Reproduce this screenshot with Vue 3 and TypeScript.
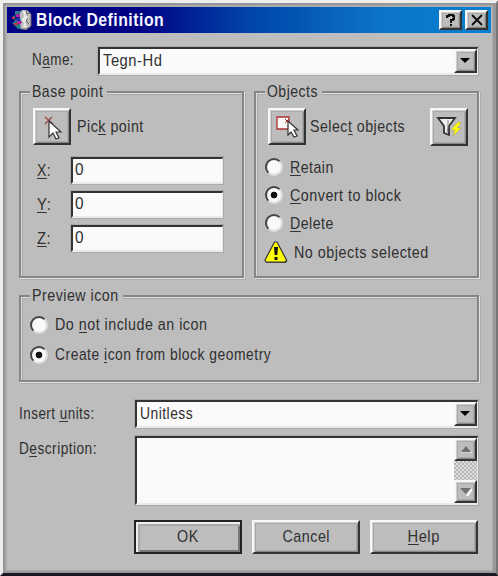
<script setup lang="ts">
import { ref, type Directive } from 'vue'

const name = ref('Tegn-Hd')
const axes = ref([
  { key: 'X', value: '0' },
  { key: 'Y', value: '0' },
  { key: 'Z', value: '0' },
])
const mode = ref('convert')
const modes = [
  { id: 'retain', key: 'R', rest: 'etain', width: 44 },
  { id: 'convert', key: 'C', rest: 'onvert to block', width: 111 },
  { id: 'delete', key: 'D', rest: 'elete', width: 44 },
]
const preview = ref('create')
const previews = [
  { id: 'none', before: 'Do ', key: 'n', after: 'ot include an icon', width: 152 },
  { id: 'create', before: 'Create ', key: 'i', after: 'con from block geometry', width: 216 },
]

// Condenses a label horizontally to the given width in pixels.
const vFit: Directive<HTMLElement, number> = {
  mounted(el, binding) {
    el.style.transform = `scaleX(${binding.value / el.offsetWidth})`
  },
}
</script>

<template>
  <div class="window">
    <header class="title-bar">
      <svg class="app-icon" width="22" height="22" viewBox="0 0 22 22">
        <path d="M4 2h7v18H7L1 14l3-2-3-4 3-2z" fill="#287c83" />
        <path d="M4 6h5v5H4z" fill="#1c1c78" />
        <path d="M5 5h4v3H5zM6 12h5v3H6z" fill="#b020a0" />
        <path d="M1 8h3v2H1zM3 14h4v2H3z" fill="#c03048" />
        <path d="M6 9h3v3H6zM9 15h3v3H9z" fill="#2038c0" />
        <path d="M11 1h5l4 4v12l-5 4-5-1-1-4 2-3-2-4 0-5z" fill="#bdbdbd" />
        <path d="M12 2l4 1-2 3 4 3-4 4 2 5-4 1 1-5-3-3 3-3z" fill="#ececec" />
        <path d="M15 1l1 4 3-1M17 9l-2 3 3 3M10 20h6l4-3V6" fill="none" stroke="#626262" />
      </svg>
      <h1><span v-fit="128" class="t">Block Definition</span></h1>
      <button class="raised caption" aria-label="?">
        <svg width="12" height="14" viewBox="0 0 12 14"><path d="M2 5V3h2V2h4v1h1v3H8v1H6v3M6 11v2" fill="none" stroke="#111" stroke-width="2" /></svg>
      </button>
      <button class="raised caption" aria-label="×">
        <svg width="12" height="12" viewBox="0 0 12 12"><path d="M1 1l10 10M11 1L1 11" stroke="#111" stroke-width="2" /></svg>
      </button>
    </header>

    <main>
      <div class="row name-row">
        <label class="name-label"><span v-fit="42" class="t">N<u>a</u>me:</span></label>
        <div class="sunken combo">
          <span v-fit="59" class="t">{{ name }}</span>
          <button class="raised arrow"><svg width="10" height="5"><path d="M0 0h10L5 5z" /></svg></button>
        </div>
      </div>

      <div class="groups">
        <section class="group">
          <h2><span v-fit="71" class="t">Base point</span></h2>
          <div class="row tool-row">
            <button class="raised tool">
              <svg width="22" height="26" viewBox="0 0 22 26">
                <path d="M4 3l8 7M11 3l-7 7" stroke="#9a4545" stroke-width="1.2" />
                <path d="M8 7v16l4-4 3 6 3-1-3-6h5z" fill="#fff" stroke="#333" stroke-width="1.2" />
              </svg>
            </button>
            <span v-fit="67" class="t">Pic<u>k</u> point</span>
          </div>
          <div class="axes">
            <label v-for="axis in axes" :key="axis.key" class="row axis">
              <span class="axis-name"><span v-fit="14" class="t"><u>{{ axis.key }}</u>:</span></span>
              <span class="sunken field"><span v-fit="9" class="t">{{ axis.value }}</span></span>
            </label>
          </div>
        </section>

        <section class="group">
          <h2><span v-fit="51" class="t">Objects</span></h2>
          <div class="row tool-row">
            <button class="raised tool">
              <svg width="24" height="26" viewBox="0 0 24 26">
                <path d="M2 3h12v12H2z" fill="#f8f8f8" stroke="#a33" stroke-width="1.3" />
                <path d="M10 5l4 4m0-4l-4 4" stroke="#a33" />
                <path d="M13 7v14l3-3 3 5 3-1-3-6h4z" fill="#fff" stroke="#333" stroke-width="1.2" />
              </svg>
            </button>
            <span v-fit="95" class="t select-text">Selec<u>t</u> objects</span>
            <button class="raised tool filter">
              <svg width="26" height="24" viewBox="0 0 26 24">
                <path d="M2 3h17l-6 8v9l-5-2v-7z" fill="#eee" stroke="#333" stroke-width="1.8" />
                <path d="M12 5v6l-1 7" stroke="#888" fill="none" />
                <path d="M22 7l-7 8h4l-2 6 8-8h-4l4-5z" fill="#ff0" stroke="#aaa040" stroke-width=".5" />
              </svg>
            </button>
          </div>
          <div class="modes">
            <label v-for="item in modes" :key="item.id" class="row option" @click="mode = item.id">
              <i class="radio" :class="{ on: mode === item.id }" />
              <span v-fit="item.width" class="t"><u>{{ item.key }}</u>{{ item.rest }}</span>
            </label>
          </div>
          <div class="row warning">
            <svg width="24" height="24" viewBox="0 0 24 24">
              <path d="M10.5 2h2.5l9.5 18-1.5 2H2l-1-2z" fill="#ff0" stroke="#333" stroke-width="1.2" />
              <path d="M2 22.5h20l1-2" stroke="#444" fill="none" />
              <path d="M10 7h4l-.7 8h-2.6zM10.5 17h3v3h-3z" fill="#111" />
            </svg>
            <span v-fit="135" class="t">No objects selected</span>
          </div>
        </section>
      </div>

      <section class="group preview">
        <h2><span v-fit="87" class="t">Preview icon</span></h2>
        <label v-for="item in previews" :key="item.id" class="row option" @click="preview = item.id">
          <i class="radio" :class="{ on: preview === item.id }" />
          <span v-fit="item.width" class="t">{{ item.before }}<u>{{ item.key }}</u>{{ item.after }}</span>
        </label>
      </section>

      <div class="row units-row">
        <label class="side-label"><span v-fit="76" class="t">Insert <u>u</u>nits:</span></label>
        <div class="sunken combo">
          <span v-fit="53" class="t">Unitless</span>
          <button class="raised arrow"><svg width="10" height="5"><path d="M0 0h10L5 5z" /></svg></button>
        </div>
      </div>

      <div class="row description-row">
        <label class="side-label"><span v-fit="78" class="t">D<u>e</u>scription:</span></label>
        <div class="sunken memo">
          <div class="scrollbar">
            <button class="raised scroll"><svg width="12" height="7"><path d="M1 6h11" stroke="#eee" /><path d="M6 0l5 6H1z" fill="#707070" /></svg></button>
            <div class="track" />
            <button class="raised scroll"><svg width="12" height="8"><path d="M7 8l5-7" stroke="#fff" stroke-width="2" /><path d="M0 0h11L5.500 6z" fill="#707070" /></svg></button>
          </div>
        </div>
      </div>

      <footer>
        <button class="raised action default"><span v-fit="22" class="t">OK</span></button>
        <button class="raised action"><span v-fit="48" class="t">Cancel</span></button>
        <button class="raised action"><span v-fit="32" class="t"><u>H</u>elp</span></button>
      </footer>
    </main>
  </div>
</template>

<style>
body { margin: 0; overflow: hidden; background: #bdbdbd; }
</style>

<style scoped>
* { box-sizing: border-box; }
.window {
  width: 498px;
  height: 576px;
  background: #bdbdbd;
  border: solid;
  border-width: 3px 2px 3px 3px;
  border-color: #eee #777 #171a20 #eee;
  box-shadow: inset 2px 2px #969696, inset -3px -2px #999, inset 4px 4px #aaa, inset -4px -3px #aaa;
  padding: 4px 5px 3px 4px;
  color: #303030;
  font: 17px/20px "Liberation Sans", Arial, sans-serif;
}
.t {
  display: inline-block;
  flex: none;
  white-space: nowrap;
  letter-spacing: .6px;
  transform-origin: left center;
}
u { text-decoration: none; box-shadow: inset 0 -1px #bdbdbd, inset 0 -2px #333; }
button { margin: 0; padding: 0; font: inherit; color: inherit; }
.row { display: flex; align-items: center; }
.title-bar {
  display: flex;
  align-items: center;
  height: 26px;
  padding: 0 3px 0 4px;
  background: linear-gradient(90deg, #000084 0 27%, #0045a8 50%, #0c75c8 78%, #087fd0);
}
.app-icon { flex: none; }
h1 { flex: 1; margin: 0 0 0 3px; font: bold 19px/24px "Liberation Sans", Arial, sans-serif; color: #f4f4ff; }
.raised {
  display: flex;
  align-items: center;
  justify-content: center;
  flex: none;
  background: #bdbdbd;
  border: 2px solid;
  border-color: #f7f7f7 #333 #333 #f7f7f7;
  box-shadow: inset 1px 1px #cfcfcf, inset 2px 2px #aaa, inset -1px -1px #888, inset -2px -2px #aaa;
}
.caption { width: 23px; height: 20px; }
.caption + .caption { margin-left: 3px; }
.sunken {
  background: #fafafa;
  border: solid;
  border-width: 3px 2px 3px 3px;
  border-color: #333 #e9e9e9 #e9e9e9 #333;
  outline: 1px solid #aaa;
  outline-offset: -1px;
}
main { padding: 13px 12px 0 12px; }
.name-row { height: 30px; }
.name-label { flex: none; width: 78px; padding-left: 13px; }
.combo { display: flex; flex: 1; align-items: center; height: 30px; padding-left: 3px; }
.name-row .t { position: relative; top: -1px; }
.name-row .combo .t { top: 0; }
.arrow { width: 23px; height: 24px; margin-left: auto; padding: 0 1px 1px 0; }
.groups { display: flex; justify-content: space-between; margin-top: 15px; }
.group {
  width: 225px;
  height: 187px;
  border: 2px solid #858585;
  box-shadow: inset 1px 1px #ddd, inset 2px 2px #aaa, 1px 1px #e5e5e5, 2px 2px #aaa;
}
h2 { width: max-content; height: 15px; margin: -11px 0 0 9px; padding: 0 0 0 2px; font: inherit; background: #bdbdbd; }
.groups .group:first-child h2 { width: 77px; }
.groups .group:last-child h2 { width: 57px; }
.preview h2 { width: 93px; }
.tool-row { height: 38px; margin: 11px 0 0 12px; align-items: flex-start; }
.tool { width: 38px; height: 37px; }
.tool-row .t { margin: 9px 0 0 6px; }
.tool-row .select-text { margin: 9px -30px 0 4px; }
.filter { height: 38px; margin: 0 9px 0 auto; }
.axes { display: grid; gap: 5px; margin-top: 10px; }
.axis { height: 29px; }
.axis-name { width: 49px; padding-left: 16px; }
.field { width: 154px; height: 29px; padding: 1px 2px; }
.modes { display: grid; gap: 8px; margin: 11px 0 0 9px; }
.option { height: 20px; }
.option .t { margin-left: 7px; }
.modes .t { margin: 2px 0 0 7px; }
.radio {
  display: block;
  flex: none;
  width: 18px;
  height: 18px;
  border: 2px solid;
  border-color: #444 #ddd #ddd #444;
  border-radius: 50%;
  background: #fafafa;
}
.radio.on { background: radial-gradient(circle, #111 0 3px, #fafafa 3.7px); }
.warning { height: 24px; margin: 7px 0 0 8px; }
.warning .t { margin: 2px 0 0 6px; }
.preview { width: 460px; height: 87px; margin-top: 17px; }
.preview .option { margin: 14px 0 0 9px; }
.preview .option + .option { margin-top: 10px; }
.units-row { height: 30px; margin-top: 17px; }
.side-label { width: 115px; }
.description-row { height: 71px; margin-top: 6px; align-items: flex-start; }
.description-row .side-label { padding-top: 4px; }
.memo { display: flex; flex: 1; height: 71px; }
.scrollbar { display: flex; flex-direction: column; width: 23px; margin-left: auto; }
.scroll { width: 23px; height: 23px; }
.track { flex: 1; background: repeating-conic-gradient(#b5b5b5 0 25%, #ddd 0 50%) 0 0 / 4px 4px; }
footer { display: flex; gap: 10px; margin: 14px 0 0 115px; }
.action { width: 108px; height: 34px; }
.action .t { transform-origin: center; }
.default { border-color: #222; box-shadow: inset 2px 2px #eee, inset 4px 4px #aaa, inset -2px -2px #777; }
</style>
